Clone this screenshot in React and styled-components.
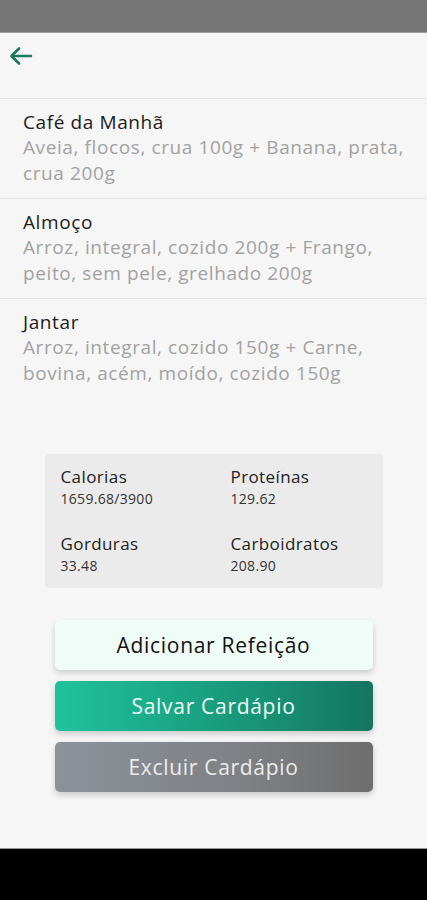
import styled, { createGlobalStyle } from "styled-components";

const Global = createGlobalStyle`
  html, body {
    margin: 0;
    padding: 0;
    background: #f6f6f6;
  }
  body {
    font-family: "Open Sans", "Noto Sans", sans-serif;
  }
`;

const Screen = styled.div`
  width: 427px;
  height: 900px;
  display: flex;
  flex-direction: column;
  background: #f6f6f6;
`;

const StatusBar = styled.div`
  height: 33px;
  flex-shrink: 0;
  background: #757575;
  border-bottom: 1px solid #9a9a9a;
  box-sizing: border-box;
`;

const Header = styled.div`
  height: 66px;
  display: flex;
  align-items: flex-start;
  padding: 11px 0 0 7px;
  box-sizing: border-box;
  border-bottom: 1px solid #e6e6e6;
`;

const BackButton = styled.button`
  border: none;
  background: none;
  padding: 0;
  display: flex;
  cursor: pointer;
`;

const Meals = styled.ul`
  list-style: none;
  margin: 0;
  padding: 0;
  align-self: stretch;
`;

const Meal = styled.li`
  padding: 11px 14px 12px 23px;
  border-bottom: ${({ last }) => (last ? "none" : "1px solid #e6e6e6")};
  letter-spacing: 0.6px;
`;

const MealName = styled.div`
  font-size: 19px;
  line-height: 24px;
  color: #1c1c1c;
`;

const MealFoods = styled.div`
  font-size: 19px;
  line-height: 26px;
  color: #a2a2a2;
`;

const Body = styled.div`
  flex: 1;
  display: flex;
  flex-direction: column;
  align-items: center;
`;

const Stats = styled.div`
  margin-top: 56px;
  width: 338px;
  box-sizing: border-box;
  padding: 12px 16px 11px;
  background: #ebebeb;
  border-radius: 4px;
  display: grid;
  grid-template-columns: 170px 1fr;
  row-gap: 23px;
`;

const Stat = styled.div`
  display: flex;
  flex-direction: column;
`;

const StatLabel = styled.span`
  font-size: 17px;
  line-height: 22px;
  letter-spacing: 0.4px;
  color: #222;
`;

const StatValue = styled.span`
  font-size: 14px;
  line-height: 22px;
  letter-spacing: 0.3px;
  color: #333;
`;

const Actions = styled.div`
  margin-top: 32px;
  width: 318px;
  display: flex;
  flex-direction: column;
  gap: 11px;
`;

const variants = {
  light: "background: #effcf8; color: #111;",
  primary:
    "background: linear-gradient(90deg, #1fc39b 0%, #178f72 70%, #147460 100%); color: #eefaf6;",
  muted:
    "background: linear-gradient(90deg, #8b939a 0%, #7e8084 60%, #6e6e6e 100%); color: #ececec;",
};

const ActionButton = styled.button`
  height: 50px;
  border: none;
  border-radius: 5px;
  font-family: inherit;
  font-size: 21px;
  letter-spacing: 0.7px;
  box-shadow: 0 3px 6px rgba(0, 0, 0, 0.18);
  cursor: pointer;
  ${({ variant }) => variants[variant]}
`;

const NavBar = styled.div`
  height: 52px;
  flex-shrink: 0;
  background: #000;
  border-top: 1px solid #999;
  box-sizing: border-box;
`;

const meals = [
  {
    name: "Café da Manhã",
    foods: "Aveia, flocos, crua 100g + Banana, prata, crua 200g",
  },
  {
    name: "Almoço",
    foods: "Arroz, integral, cozido 200g + Frango, peito, sem pele, grelhado 200g",
  },
  {
    name: "Jantar",
    foods: "Arroz, integral, cozido 150g + Carne, bovina, acém, moído, cozido 150g",
  },
];

const stats = [
  { label: "Calorias", value: "1659.68/3900" },
  { label: "Proteínas", value: "129.62" },
  { label: "Gorduras", value: "33.48" },
  { label: "Carboidratos", value: "208.90" },
];

const App = () => {
  return (
    <Screen>
      <Global />
      <StatusBar />
      <Header>
        <BackButton aria-label="Voltar">
          <svg width="26" height="24" viewBox="0 0 26 24" fill="none">
            <path
              d="M24 12H4.5M12 4.5L4.5 12L12 19.5"
              stroke="#1b7a5f"
              strokeWidth="2.6"
              strokeLinecap="round"
              strokeLinejoin="round"
            />
          </svg>
        </BackButton>
      </Header>
      <Body>
        <Meals>
          {meals.map((m, i) => (
            <Meal key={m.name} last={i === meals.length - 1}>
              <MealName>{m.name}</MealName>
              <MealFoods>{m.foods}</MealFoods>
            </Meal>
          ))}
        </Meals>
        <Stats>
          {stats.map((s) => (
            <Stat key={s.label}>
              <StatLabel>{s.label}</StatLabel>
              <StatValue>{s.value}</StatValue>
            </Stat>
          ))}
        </Stats>
        <Actions>
          <ActionButton variant="light">Adicionar Refeição</ActionButton>
          <ActionButton variant="primary">Salvar Cardápio</ActionButton>
          <ActionButton variant="muted">Excluir Cardápio</ActionButton>
        </Actions>
      </Body>
      <NavBar />
    </Screen>
  );
};

export default App;
